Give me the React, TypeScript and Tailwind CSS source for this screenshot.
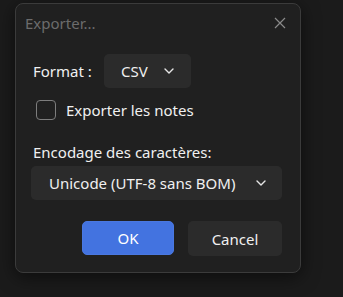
import { useState } from "react";

// "Exporter..." dialog — dark theme, format + encoding pickers
function Chevron({ className = "" }: { className?: string }) {
  return (
    <svg width="10" height="6" viewBox="0 0 10 6" fill="none" className={className}>
      <path d="M1 1l4 4 4-4" stroke="#e6e6e6" strokeWidth="1.4" strokeLinecap="round" strokeLinejoin="round" />
    </svg>
  );
}

export default function App() {
  const [notes, setNotes] = useState(false);

  return (
    <div
      className="h-[297px] w-[343px] overflow-hidden bg-[#1b1b1b] pt-[3px] pl-[15px] text-[15px] leading-[20px] text-[#f0f0f0]"
      style={{ fontFamily: '"Noto Sans", "Open Sans", sans-serif' }}
    >
      <div className="flex h-[270px] w-[286px] flex-col rounded-[8px] border border-[#3b3b3b] bg-[#202020] shadow-[0_4px_18px_rgba(0,0,0,0.55)]">
        {/* Title bar */}
        <div className="flex h-[36px] items-center justify-between pl-[9px] pr-[14px] pt-[1px]">
          <span className="text-[#6c6c6c]">Exporter...</span>
          <svg width="12" height="12" viewBox="0 0 12 12" className="mt-[1px]">
            <path d="M1 1l10 10M11 1L1 11" stroke="#8a8a8a" strokeWidth="1.2" />
          </svg>
        </div>

        {/* Format */}
        <div className="mt-[14px] flex items-center pl-[17px]">
          <span className="w-[71px]">Format :</span>
          <button className="flex h-[34px] w-[87px] items-center rounded-[5px] bg-[#2b2b2b] pl-[17px]">
            <span>CSV</span>
            <Chevron className="ml-[16px]" />
          </button>
        </div>

        {/* Notes checkbox */}
        <label className="mt-[12px] flex items-center pl-[20px]">
          <span
            onClick={() => setNotes(!notes)}
            className="h-[20px] w-[20px] rounded-[4px] border-[1.5px] border-[#7d7d7d]"
          />
          <span className="ml-[10px]">Exporter les notes</span>
        </label>

        {/* Encoding */}
        <div className="mt-[21px] pl-[17px] leading-[22px]">Encodage des caractères:</div>
        <button className="ml-[15px] mr-[18px] mt-[3px] flex h-[34px] items-center rounded-[5px] bg-[#2b2b2b] pl-[18px]">
          <span>Unicode (UTF-8 sans BOM)</span>
          <Chevron className="ml-[21px]" />
        </button>

        {/* Actions */}
        <div className="mt-[21px] flex justify-end gap-[14px] pr-[18px]">
          <button className="h-[34px] w-[92px] rounded-[5px] border border-[#4a78e0] bg-[#4373e0] text-white">OK</button>
          <button className="h-[35px] w-[94px] rounded-[5px] bg-[#2b2b2b]">Cancel</button>
        </div>
      </div>
    </div>
  );
}
